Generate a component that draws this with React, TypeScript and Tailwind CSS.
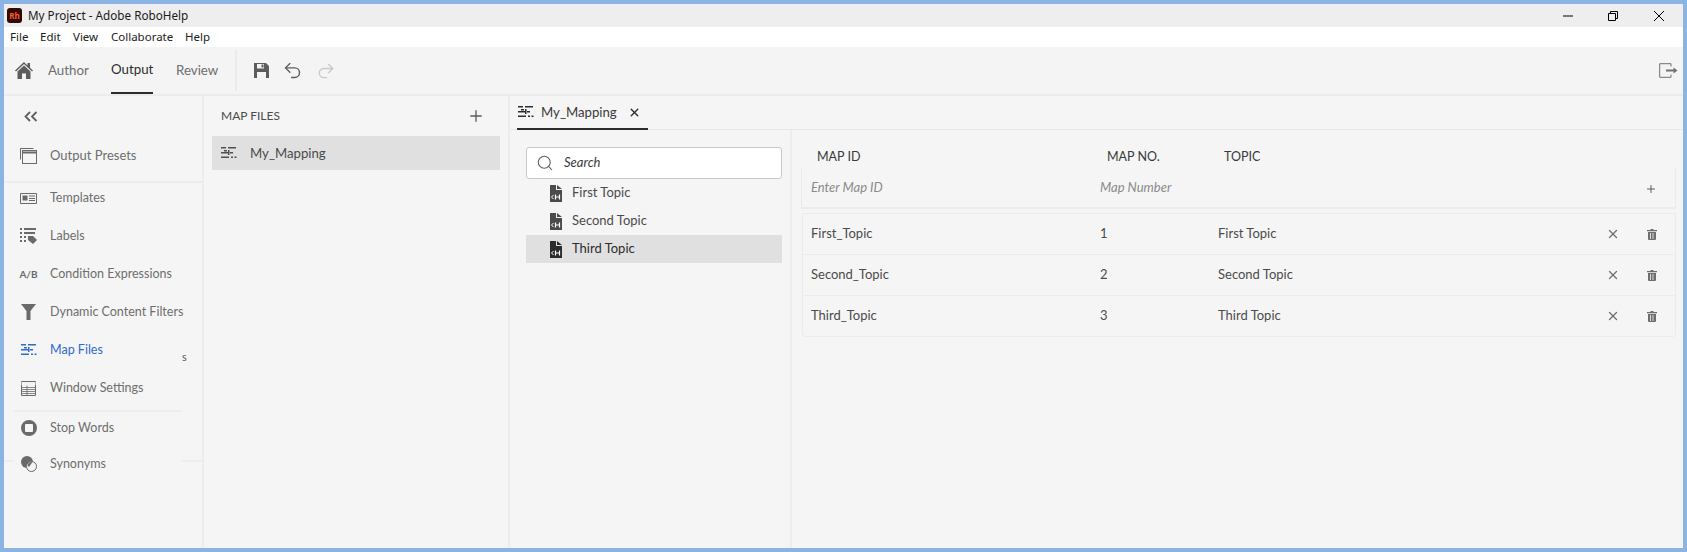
import { ReactNode } from "react"
import { Undo2, Redo2, Plus, X, Search } from "lucide-react"

const ADOBE = "font-['Lato','Noto_Sans',sans-serif]"

function MapIcon({ className = "text-[#505050]" }: { className?: string }) {
    return (
        <svg width="16" height="12" viewBox="0 0 16 12" fill="currentColor" className={className}>
            <rect x="0" y="0" width="5" height="1.5" />
            <rect x="7" y="0" width="8" height="1.5" />
            <rect x="3" y="3" width="3" height="1.5" />
            <rect x="0" y="5" width="8" height="1.5" />
            <rect x="7" y="3" width="1.5" height="5" />
            <rect x="0" y="9.5" width="8" height="1.5" />
            <rect x="10" y="9.5" width="2" height="1.5" />
            <rect x="13.5" y="9.5" width="2" height="1.5" />
            <rect x="9" y="5" width="3" height="1.5" />
        </svg>
    )
}

function HtmlFileIcon({ className = "text-[#4b4b4b]" }: { className?: string }) {
    return (
        <svg width="12" height="17" viewBox="0 0 12 17" className={className}>
            <path d="M0 0h6v5h6v12H0z" fill="currentColor" />
            <path d="M7 0l5 4H7z" fill="currentColor" />
            <path d="M3.5 10L1.5 12l2 2" stroke="#fff" strokeWidth="1" fill="none" />
            <path d="M5.5 9.5v5M9.5 9.5v5M5.5 12h4" stroke="#fff" strokeWidth="1.2" fill="none" />
        </svg>
    )
}

function TrashIcon() {
    return (
        <svg width="10" height="11" viewBox="0 0 10 11" fill="#6e6e6e">
            <path d="M3.5 0h3v1H10v1.2H0V1h3.5z" />
            <path d="M1 3h8v7a1 1 0 0 1-1 1H2a1 1 0 0 1-1-1zM3 4v6h.8V4zm2.6 0v6h.8V4z" fillRule="evenodd" />
        </svg>
    )
}

function SidebarItem({ icon, label, active, h = "h-[38px]", size = "text-[12.5px]" }: { icon: ReactNode; label: string; active?: boolean; h?: string; size?: string }) {
    return (
        <div className={`flex items-center ${h} pl-[16px]`}>
            <div className="w-[17px] flex justify-center shrink-0">{icon}</div>
            <span className={`ml-[13px] ${size} ${active ? "text-[#2f6bd0]" : "text-[#6e6e6e]"}`}>{label}</span>
        </div>
    )
}

const sideIcon = "#6a6a6a"

const rows = [
    { id: "First_Topic", no: "1", topic: "First Topic" },
    { id: "Second_Topic", no: "2", topic: "Second Topic" },
    { id: "Third_Topic", no: "3", topic: "Third Topic" },
]

export default function App() {
    return (
        <div className={`w-[1687px] h-[552px] overflow-hidden border-[4px] border-[#8ab4e4] flex flex-col bg-[#f5f5f5] ${ADOBE}`}>
            {/* Title bar */}
            <div className="h-[23px] shrink-0 bg-[#eeeeee] flex items-center font-['Noto_Sans',sans-serif]">
                <div className="ml-[3px] w-[15px] h-[15px] rounded-[3px] bg-[#300a06] flex items-center justify-center text-[8px] font-bold text-[#ff5a26] leading-none">Rh</div>
                <span className="ml-[6px] text-[11.7px] text-[#1a1a1a]">My Project - Adobe RoboHelp</span>
                <div className="ml-auto flex items-center">
                    <svg width="12" height="12" viewBox="0 0 12 12" className="mr-[33px]"><path d="M1 6h10" stroke="#000" strokeWidth="1" /></svg>
                    <svg width="12" height="12" viewBox="0 0 12 12" className="mr-[34px]"><path d="M1.5 3.5h7v7h-7zM3.5 3.5v-2h7v7h-2" stroke="#000" fill="none" /></svg>
                    <svg width="12" height="12" viewBox="0 0 12 12" className="mr-[18px]"><path d="M1 1l10 10M11 1L1 11" stroke="#000" /></svg>
                </div>
            </div>

            {/* Menu bar */}
            <div className="h-[20px] shrink-0 bg-white flex items-center pl-[6px] text-[11.5px] text-[#222] font-['Noto_Sans',sans-serif]">
                <span className="w-[30px]">File</span>
                <span className="w-[33px]">Edit</span>
                <span className="w-[38px]">View</span>
                <span className="w-[74px]">Collaborate</span>
                <span>Help</span>
            </div>

            {/* Toolbar */}
            <div className="h-[49px] shrink-0 flex items-stretch border-b-[2px] border-[#ebebeb] bg-[#f4f4f4]">
                <div className="w-[44px] flex items-center justify-center">
                    <svg width="18" height="17" viewBox="0 0 18 17" fill="#5c5c5c" className="-ml-[4px]">
                        <path d="M9 0L0 8.500l1 1 8-7.500 8 7.500 1-1-3-2.800V1h-2.500v2.400z" />
                        <path d="M9 3.500l6.500 6V17H11v-5.500H7V17H2.500V9.500z" />
                    </svg>
                </div>
                <div className="w-[63px] flex items-center text-[13.3px] text-[#6e6e6e]">Author</div>
                <div className="w-[65px] flex items-center">
                    <span className="h-full flex items-center border-b-[2px] border-[#2c2c2c] text-[13.3px] text-[#2c2c2c]">Output</span>
                </div>
                <div className="w-[59px] flex items-center text-[13.3px] text-[#6e6e6e]">Review</div>
                <div className="w-[2px] my-[3px] bg-[#ebebeb]" />
                <div className="flex items-center pl-[17px] gap-[13px]">
                    <svg width="15" height="15" viewBox="0 0 15 15" fill="#5c5c5c">
                        <path d="M0 0h12l3 3v12H0zM3 1v4.500h7V1zM7.500 1.500H9.500v3H7.500zM3 9v6h9V9z" fillRule="evenodd" />
                    </svg>
                    <Undo2 size={21} stroke="#5c5c5c" strokeWidth={1.6} />
                    <Redo2 size={20} stroke="#c9c9c9" strokeWidth={1.6} />
                </div>
                <div className="ml-auto flex items-center pr-[5px]">
                    <svg width="19" height="15" viewBox="0 0 19 15" fill="none">
                        <path d="M12 3.500V.7H.7v13.600H12v-2.800" stroke="#707070" />
                        <path d="M7 7.500h8" stroke="#707070" strokeWidth="2" />
                        <path d="M14.500 4.500l4 3-4 3z" fill="#707070" />
                    </svg>
                </div>
            </div>

            {/* Body */}
            <div className="flex-1 min-h-0 flex">
                {/* Sidebar */}
                <div className="w-[198px] shrink-0 flex flex-col">
                    <div className="h-[41px] shrink-0 flex items-center pl-[20px]">
                        <svg width="14" height="11" viewBox="0 0 14 11" fill="none" stroke="#606060" strokeWidth="1.8">
                            <path d="M6 1L1.500 5.500 6 10M12.500 1L8 5.500l4.500 4.500" />
                        </svg>
                    </div>
                    <div className="border-b-[2px] border-[#ededed] pb-[6px]">
                        <SidebarItem
                            label="Output Presets"
                            size="text-[13px]"
                            icon={
                                <svg width="17" height="16" viewBox="0 0 17 16" fill="none" stroke={sideIcon}>
                                    <path d="M.5.5h13M.5.5v11" />
                                    <rect x="2.500" y="2.500" width="14" height="13" />
                                    <path d="M2.500 4.500h14" strokeWidth="2" />
                                </svg>
                            }
                        />
                    </div>
                    <div className="-mt-[4px]">
                        <SidebarItem
                            label="Templates"
                            icon={
                                <svg width="17" height="11" viewBox="0 0 17 11" fill={sideIcon}>
                                    <path d="M.5.5h16v10H.5z" fill="none" stroke={sideIcon} />
                                    <rect x="2.500" y="2.500" width="5" height="5" />
                                    <rect x="9" y="2.500" width="6" height="1" />
                                    <rect x="9" y="5" width="6" height="1" />
                                    <rect x="9" y="7" width="6" height="1" />
                                </svg>
                            }
                        />
                    </div>
                    <SidebarItem
                        label="Labels"
                        icon={
                            <svg width="17" height="16" viewBox="0 0 17 16" fill={sideIcon}>
                                <rect x="0" y="0" width="2" height="2" />
                                <rect x="4" y="0" width="12" height="2" />
                                <rect x="0" y="4" width="2" height="2" />
                                <rect x="4" y="4" width="11" height="2" />
                                <rect x="0" y="8" width="2" height="2" />
                                <rect x="4" y="8" width="2" height="2" />
                                <rect x="0" y="12" width="2" height="2" />
                                <rect x="4" y="12" width="2" height="2" />
                                <path d="M8 8h5l4 4-4 4-5-4z" />
                            </svg>
                        }
                    />
                    <SidebarItem label="Condition Expressions" icon={<span className="text-[10px] font-bold text-[#6a6a6a] whitespace-nowrap">A/B</span>} />
                    <SidebarItem
                        label="Dynamic Content Filters"
                        icon={
                            <svg width="15" height="16" viewBox="0 0 15 16" fill={sideIcon}>
                                <path d="M0 0h15L9.500 7v9H5.500V7z" />
                            </svg>
                        }
                    />
                    <div className="relative">
                        <SidebarItem label="Map Files" active icon={<MapIcon className="text-[#2f6bd0]" />} />
                        <span className="absolute left-[178px] top-[18px] text-[11px] text-[#555]">s</span>
                    </div>
                    <div className="border-b-[2px] border-[#ededed] ml-[10px] mr-[20px] pb-[3px]">
                        <div className="-ml-[10px] -mr-[20px]">
                            <SidebarItem
                                label="Window Settings"
                                icon={
                                    <svg width="15" height="15" viewBox="0 0 15 15" fill="none" stroke={sideIcon}>
                                        <path d="M.5.5h14v14H.5z" />
                                        <path d="M.5 6.500h14M.5 8.500h14M.5 10.500h14M.5 12.500h14M6 4.500v10" strokeWidth=".8" />
                                        <path d="M.5 2.500h14" strokeWidth="3" stroke="#f4f4f4" />
                                    </svg>
                                }
                            />
                        </div>
                    </div>
                    <SidebarItem
                        label="Stop Words"
                        h="h-[32px]"
                        icon={
                            <svg width="16" height="16" viewBox="0 0 16 16" fill="none">
                                <path d="M8 0a8 8 0 1 1 0 16A8 8 0 0 1 8 0zM5 4a1 1 0 0 0-1 1v6a1 1 0 0 0 1 1h6a1 1 0 0 0 1-1V5a1 1 0 0 0-1-1z" fill={sideIcon} fillRule="evenodd" />
                            </svg>
                        }
                    />
                    <div className="relative">
                        <div className="absolute left-0 top-[16px] w-[10px] h-[2px] bg-[#ededed]" />
                        <div className="absolute right-0 top-[16px] w-[20px] h-[2px] bg-[#ededed]" />
                        <SidebarItem
                            label="Synonyms"
                            h="h-[40px]"
                            icon={
                                <svg width="16" height="16" viewBox="0 0 16 16" fill="none">
                                    <circle cx="6" cy="6" r="6" fill={sideIcon} />
                                    <circle cx="10.500" cy="10.500" r="5" stroke={sideIcon} fill="#f4f4f4" />
                                    <path d="M6.500 9.500a4.500 4.500 0 0 1 5-3.500L8 11z" fill={sideIcon} />
                                </svg>
                            }
                        />
                    </div>
                </div>
                <div className="w-[2px] shrink-0 bg-[#ededed]" />

                {/* Map files panel */}
                <div className="w-[304px] shrink-0 flex flex-col">
                    <div className="h-[40px] flex items-center justify-between pl-[17px] pr-[23px]">
                        <span className="text-[12px] text-[#4b4b4b]">MAP FILES</span>
                        <Plus size={18} stroke="#5c5c5c" strokeWidth={1.8} />
                    </div>
                    <div className="mx-[8px] h-[34px] bg-[#e0e0e0] flex items-center pl-[9px]">
                        <MapIcon />
                        <span className="ml-[13px] pt-[1px] text-[13.2px] text-[#4b4b4b]">My_Mapping</span>
                    </div>
                </div>
                <div className="w-[2px] shrink-0 bg-[#ededed]" />

                {/* Editor */}
                <div className="flex-1 min-w-0 flex flex-col">
                    <div className="h-[34px] shrink-0 flex items-stretch border-b-[1px] border-[#e8e8e8] pl-[7px]">
                        <div className="w-[131px] flex items-center border-b-[2px] border-[#2c2c2c] -mb-[1px] pl-[1px]">
                            <MapIcon className="text-[#2c2c2c]" />
                            <span className="ml-[7px] pt-[1px] text-[13.2px] text-[#3a3a3a]">My_Mapping</span>
                            <X size={13} stroke="#2c2c2c" strokeWidth={2.6} className="ml-[11px]" />
                        </div>
                    </div>
                    <div className="flex-1 min-h-0 flex">
                        {/* Topic list */}
                        <div className="w-[280px] shrink-0 pl-[16px] pr-[8px] pt-[17px]">
                            <div className="h-[32px] rounded-[3px] border border-[#c9c9c9] bg-white flex items-center pl-[9px]">
                                <Search size={18} stroke="#5c5c5c" strokeWidth={1.4} />
                                <span className="ml-[10px] text-[13px] italic text-[#3a3a3a]">Search</span>
                            </div>
                            {["First Topic", "Second Topic", "Third Topic"].map((t, i) => (
                                <div key={t} className={`h-[28px] flex items-center pl-[24px] ${i === 2 ? "bg-[#e0e0e0]" : ""}`}>
                                    <HtmlFileIcon className={i === 2 ? "text-[#2c2c2c]" : "text-[#4b4b4b]"} />
                                    <span className={`ml-[10px] text-[13px] ${i === 2 ? "text-[#2c2c2c]" : "text-[#4b4b4b]"}`}>{t}</span>
                                </div>
                            ))}
                        </div>
                        <div className="w-[2px] shrink-0 bg-[#ededed]" />

                        {/* Mapping table */}
                        <div className="flex-1 min-w-0 pl-[9px] pr-[7px]">
                            <div className="h-[38px] flex items-end pb-[1px] text-[12.5px] text-[#3a3a3a]">
                                <span className="ml-[16px] w-[290px]">MAP ID</span>
                                <span className="w-[117px]">MAP NO.</span>
                                <span>TOPIC</span>
                            </div>
                            <div className="h-[41px] border-l border-r border-b-[2px] border-[#ebebeb] flex items-center text-[13px] italic text-[#8a8a8a]">
                                <span className="ml-[9px] w-[289px]">Enter Map ID</span>
                                <span>Map Number</span>
                                <Plus size={12} stroke="#5c5c5c" strokeWidth={2} className="ml-auto mr-[18px] mt-[3px]" />
                            </div>
                            <div className="mt-[4px] rounded-b-[4px] border border-[#ebebeb] ml-[1px] divide-y divide-[#ebebeb]">
                                {rows.map((r) => (
                                    <div key={r.id} className="box-content h-[40px] flex items-center text-[13px] text-[#4b4b4b]">
                                        <span className="ml-[8px] w-[289px]">{r.id}</span>
                                        <span className="w-[118px]">{r.no}</span>
                                        <span>{r.topic}</span>
                                        <div className="ml-auto flex items-center">
                                            <X size={14} stroke="#6e6e6e" strokeWidth={2.2} />
                                            <div className="ml-[27px] mr-[18px]">
                                                <TrashIcon />
                                            </div>
                                        </div>
                                    </div>
                                ))}
                            </div>
                        </div>
                    </div>
                </div>
            </div>
        </div>
    )
}
